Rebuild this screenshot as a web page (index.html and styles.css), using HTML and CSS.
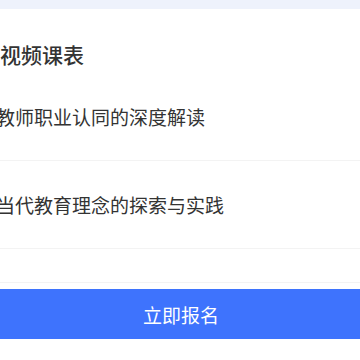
FILE: index.html
```html
<!DOCTYPE html>
<html lang="zh">
<head>
<meta charset="utf-8">
<link rel="stylesheet" href="styles.css">
</head>
<body>
<div class="page">
  <div class="topband"></div>
  <div class="title">视频课表</div>
  <div class="list">
    <div class="row">教师职业认同的深度解读</div>
    <div class="row">当代教育理念的探索与实践</div>
    <div class="row empty"></div>
  </div>
  <div class="footer">
    <div class="btn">立即报名</div>
  </div>
</div>
</body>
</html>
```
FILE: styles.css
```css
html, body {
  margin: 0;
  padding: 0;
  background: #ffffff;
}
body {
  width: 360px;
  height: 360px;
  overflow: hidden;
  font-family: "Noto Sans CJK SC", "Noto Sans", sans-serif;
  color: #333333;
}
.page {
  display: flex;
  flex-direction: column;
}
.topband {
  height: 9px;
  background: #eef2fc;
}
.title {
  height: 64px;
  display: flex;
  align-items: center;
  font-size: 21px;
  font-weight: 500;
  color: #333333;
  padding-top: 26px;
  box-sizing: border-box;
}
.list {
  display: flex;
  flex-direction: column;
}
.row {
  height: 88px;
  box-sizing: border-box;
  border-bottom: 1px solid #f3f3f3;
  display: flex;
  align-items: center;
  font-size: 19px;
  margin-left: -4px;
}
.row.empty {
  height: 34px;
}
.footer {
  padding-top: 6px;
}
.btn {
  height: 50px;
  background: #3e73fd;
  color: #ffffff;
  font-size: 19px;
  display: flex;
  align-items: center;
  justify-content: center;
  padding-left: 2px;
}
```
